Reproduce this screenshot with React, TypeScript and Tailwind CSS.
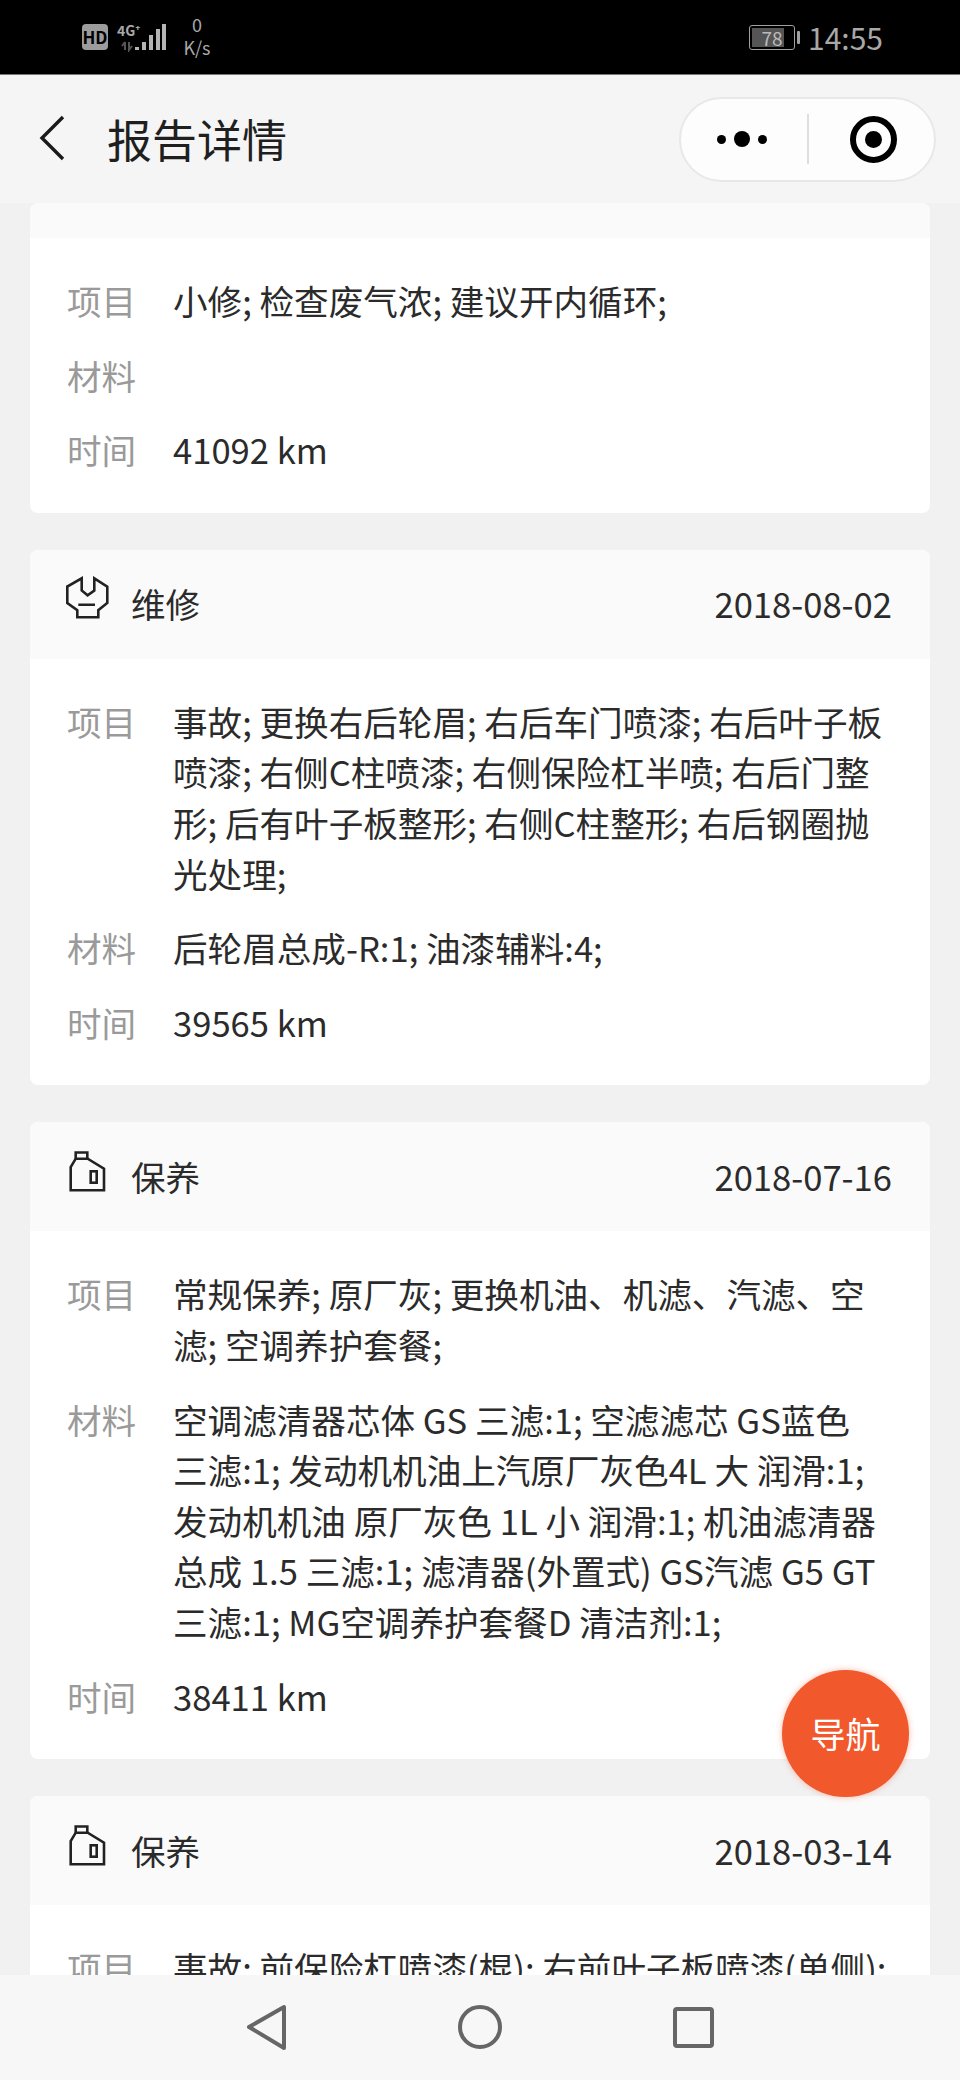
const font = { fontFamily: '"Noto Sans CJK SC", "Noto Sans", sans-serif' };

function WrenchIcon() {
  return (
    <svg width="45" height="44" viewBox="0 0 45 44" fill="none" stroke="#222" strokeWidth="2.6" className="block -ml-[2px] -mt-[2px]">
      <path d="M16.7 2.3 V14.5 L22.6 19.3 L29.3 14.5 V2.3 L42.3 10.6 V27 L33.3 34.2 V41.3 H12.3 V34.2 L2.3 27 V10.6 Z" />
      <path d="M13.3 28.8 H30" />
    </svg>
  );
}

function BottleIcon() {
  return (
    <svg width="37" height="41" viewBox="0 0 37 41" fill="none" stroke="#222" strokeWidth="2.6" className="block ml-[2px]">
      <path d="M1.7 39.3 V16 L6.7 7.7 H18.7 L35 17.7 V39.3 Z" />
      <path d="M6.7 7.7 V1.5 H18.3 V7.7" />
      <rect x="21.7" y="20.3" width="6" height="11.4" />
    </svg>
  );
}

type Row = { label: string; value: string };
type Card = { kind?: "wrench" | "bottle"; title?: string; date?: string; rows: Row[] };

const cards: Card[] = [
  {
    rows: [
      { label: "项目", value: "小修; 检查废气浓; 建议开内循环;" },
      { label: "材料", value: "" },
      { label: "时间", value: "41092 km" },
    ],
  },
  {
    kind: "wrench",
    title: "维修",
    date: "2018-08-02",
    rows: [
      { label: "项目", value: "事故; 更换右后轮眉; 右后车门喷漆; 右后叶子板喷漆; 右侧C柱喷漆; 右侧保险杠半喷; 右后门整形; 后有叶子板整形; 右侧C柱整形; 右后钢圈抛光处理;" },
      { label: "材料", value: "后轮眉总成-R:1; 油漆辅料:4;" },
      { label: "时间", value: "39565 km" },
    ],
  },
  {
    kind: "bottle",
    title: "保养",
    date: "2018-07-16",
    rows: [
      { label: "项目", value: "常规保养; 原厂灰; 更换机油、机滤、汽滤、空滤; 空调养护套餐;" },
      { label: "材料", value: "空调滤清器芯体 GS 三滤:1; 空滤滤芯 GS蓝色 三滤:1; 发动机机油上汽原厂灰色4L 大 润滑:1; 发动机机油 原厂灰色 1L 小 润滑:1; 机油滤清器 总成 1.5 三滤:1; 滤清器(外置式) GS汽滤 G5 GT 三滤:1; MG空调养护套餐D 清洁剂:1;" },
      { label: "时间", value: "38411 km" },
    ],
  },
  {
    kind: "bottle",
    title: "保养",
    date: "2018-03-14",
    rows: [{ label: "项目", value: "事故; 前保险杠喷漆(棍); 右前叶子板喷漆(单侧);" }],
  },
];

function CardView({ card }: { card: Card }) {
  return (
    <div className="shrink-0 rounded-[8px] overflow-hidden bg-white">
      <div className={card.title ? "h-[109px] bg-[#fafafa] flex items-center pl-[37px] pr-[38px] text-[34.6px] text-[#2b2b2b]" : "h-[35px] bg-[#fafafa]"}>
        {card.title && (
          <>
            <div className="w-[64px] -mt-[10px]">{card.kind === "wrench" ? <WrenchIcon /> : <BottleIcon />}</div>
            <span className="flex-1">{card.title}</span>
            <span>{card.date}</span>
          </>
        )}
      </div>
      <div className="pt-[37px] pb-[38px] pl-[37px] pr-[38px] flex flex-col gap-[24px] text-[34.6px] leading-[50.6px]">
        {card.rows.map((r) => (
          <div key={r.label} className="flex min-h-[50px]">
            <div className="w-[106px] shrink-0 text-[#9a9a9a]">{r.label}</div>
            <div className="flex-1 text-[#2b2b2b]">{r.value}</div>
          </div>
        ))}
      </div>
    </div>
  );
}

export default function App() {
  return (
    <div style={font} className="relative w-[960px] h-[2080px] overflow-hidden flex flex-col bg-[#f1f1f1]">
      <div className="h-[75px] shrink-0 bg-black flex items-center pl-[82px] pr-[77px] text-[#a8a8a8] border-b border-[#777]">
        <div className="w-[26px] h-[26px] rounded-[4px] bg-[#9c9c9c] text-black text-[17px] font-bold flex items-center justify-center">HD</div>
        <div className="relative w-[52px] h-[30px] ml-[8px]">
          <span className="absolute left-[1px] top-[1px] text-[14px] font-bold leading-[14px]">4G⁺</span>
          <svg width="52" height="30" viewBox="0 0 52 30" className="absolute left-0 top-0">
            <rect x="19" y="25" width="4" height="3" fill="#b5b5b5" />
            <rect x="26" y="20" width="4" height="8" fill="#b5b5b5" />
            <rect x="33" y="13" width="4" height="15" fill="#b5b5b5" />
            <rect x="40" y="7" width="4" height="21" fill="#b5b5b5" />
            <rect x="46" y="2" width="4" height="26" fill="#b5b5b5" />
            <path d="M9 20v8M6 24l3-4M13 20v8l3-4" stroke="#555" strokeWidth="2" fill="none" />
          </svg>
        </div>
        <div className="ml-[13px] w-[32px] flex flex-col items-center text-[18px] leading-[23px] -mt-[2px]">
          <span>0</span>
          <span>K/s</span>
        </div>
        <div className="flex-1" />
        <div className="relative w-[46px] h-[25px] rounded-[3px] border border-[#a0a0a0]">
          <div className="absolute left-[2px] top-[2px] bottom-[2px] w-[32px] bg-[#555]" />
          <div className="absolute inset-0 flex items-center justify-center text-[19px] leading-none text-[#bbb]">78</div>
        </div>
        <div className="ml-[2px] w-[3px] h-[13px] bg-[#a0a0a0] rounded-[1px]" />
        <div className="ml-[8px] text-[30px] leading-none">14:55</div>
      </div>

      <div className="h-[128px] shrink-0 bg-[#f5f5f5] flex items-center pl-[39px] pr-[24px] z-10">
        <svg width="26" height="46" viewBox="0 0 26 46" fill="none" stroke="#1a1a1a" strokeWidth="3.4" className="shrink-0 mt-[-2px]">
          <path d="M24 2 L3 23 L24 44" />
        </svg>
        <div className="ml-[42px] flex-1 text-[45px] text-[#1f1f1f]">报告详情</div>
        <div className="w-[257px] h-[85px] rounded-full bg-[#fdfdfd] border-2 border-[#e8e8e8] flex items-center">
          <div className="flex-1 flex items-center justify-center gap-[8px] pr-[4px]">
            <span className="w-[9px] h-[9px] rounded-full bg-black" />
            <span className="w-[16px] h-[16px] rounded-full bg-black" />
            <span className="w-[9px] h-[9px] rounded-full bg-black" />
          </div>
          <div className="w-[2px] h-[50px] bg-[#dedede]" />
          <div className="w-[125px] pl-[3px] flex items-center justify-center">
            <div className="w-[47px] h-[47px] rounded-full border-[6px] border-black flex items-center justify-center">
              <div className="w-[17px] h-[17px] rounded-full bg-black" />
            </div>
          </div>
        </div>
      </div>

      <div className="flex-1 min-h-0 overflow-hidden px-[30px] flex flex-col gap-[37px]">
        {cards.map((c, i) => (
          <CardView key={i} card={c} />
        ))}
      </div>

      <div className="h-[105px] shrink-0 bg-[#f7f7f7] flex items-center z-10">
        <svg width="960" height="105" viewBox="0 0 960 105" fill="none" stroke="#666" strokeWidth="4" strokeLinejoin="round">
          <path d="M284 32 V73 L249 52 Z" />
          <circle cx="480" cy="52" r="20" />
          <rect x="675" y="34" width="37" height="37" rx="2" />
        </svg>
      </div>

      <div className="absolute left-[782px] top-[1670px] w-[127px] h-[127px] rounded-full bg-[#f1582c] flex items-center justify-center text-white text-[35px] z-20 shadow-[0_0_6px_rgba(241,88,44,0.4)]">
        导航
      </div>
    </div>
  );
}
